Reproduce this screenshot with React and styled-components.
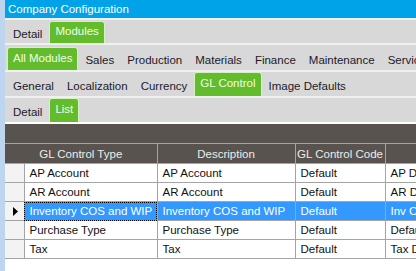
import React from "react";
import styled, { createGlobalStyle, css } from "styled-components";

const GlobalStyle = createGlobalStyle`
  html, body {
    margin: 0;
    padding: 0;
    overflow: hidden;
    background: #fff;
    font-family: "Liberation Sans", Arial, sans-serif;
    font-size: 11.5px;
  }
`;

const Page = styled.div`
  display: flex;
  width: 416px;
  height: 271px;
  overflow: hidden;
  background: #fff;
`;

const LeftStrip = styled.div`
  width: 5px;
  flex: none;
  background: #bdd5ee;
`;

const Main = styled.div`
  flex: 1;
  min-width: 0;
  display: flex;
  flex-direction: column;
  overflow: hidden;
`;

const TitleBar = styled.div`
  height: 18px;
  line-height: 18px;
  padding-left: 3px;
  background: #00a3e8;
  color: #fff;
  white-space: nowrap;
`;

const TabRow = styled.div`
  display: flex;
  align-items: stretch;
  gap: 1px;
  height: ${(p) => p.$height}px;
  box-sizing: border-box;
  padding: ${(p) => p.$top}px 0 0 2px;
  border-top: 2px solid #f0f0f0;
  background: #d8d8d8;
  white-space: nowrap;
`;

const Tab = styled.div`
  display: flex;
  align-items: center;
  padding: 2px 5px 0;
  border: 1px solid transparent;
  border-bottom: 0;
  color: #1c1a2c;
  cursor: pointer;

  ${(p) =>
    p.$active &&
    css`
      padding: 0 5px 3px;
      background: #62bc2c;
      border-color: #d6efc4;
      border-radius: 3px 3px 0 0;
      color: #f2fcea;
    `}
`;

const GroupBand = styled.div`
  height: 19px;
  margin-top: 2px;
  background: #58534f;
  border-bottom: 1px solid #a4a4a4;
`;

const GridWrap = styled.div`
  flex: 1;
  overflow: hidden;
  background: #fff;
`;

const Grid = styled.table`
  border-collapse: collapse;
  table-layout: fixed;
  width: 460px;
`;

const HeadCell = styled.th`
  height: 19px;
  padding: 0;
  background: #58534f;
  color: #ececec;
  font-weight: normal;
  text-align: center;
  border: 1px solid #a4a4a4;
  border-top: 0;
  white-space: nowrap;
  overflow: hidden;
`;

const RowHead = styled.td`
  height: 18px;
  padding: 0;
  background: #f3f3f3;
  border: 1px solid #a4a4a4;
  border-left: 0;
  text-align: center;
  vertical-align: middle;
`;

const Cell = styled.td`
  height: 18px;
  padding: 0 5px;
  border: 1px solid #a4a4a4;
  background: ${(p) => (p.$selected ? "#3399ff" : "#fff")};
  color: ${(p) => (p.$selected ? "#fff" : "#111")};
  white-space: nowrap;
  overflow: hidden;
  ${(p) =>
    p.$focus &&
    css`
      outline: 1px dotted #000;
      outline-offset: -1px;
    `}
`;

const Arrow = () => (
  <svg width="6" height="9" viewBox="0 0 6 9" style={{ display: "block", margin: "0 0 0 8px" }}>
    <path d="M0 0 L5 4.5 L0 9 Z" fill="#000" />
  </svg>
);

const rows = [
  ["AP Account", "AP Account", "Default", "AP Default"],
  ["AR Account", "AR Account", "Default", "AR Default"],
  ["Inventory COS and WIP", "Inventory COS and WIP", "Default", "Inv COS Default"],
  ["Purchase Type", "Purchase Type", "Default", "Default"],
  ["Tax", "Tax", "Default", "Tax Default"],
];

const selectedRow = 2;

function Tabs({ items, active, height, top }) {
  return (
    <TabRow $height={height} $top={top}>
      {items.map((t) => (
        <Tab key={t} $active={t === active}>
          {t}
        </Tab>
      ))}
    </TabRow>
  );
}

export default function App() {
  return (
    <>
      <GlobalStyle />
      <Page>
        <LeftStrip />
        <Main>
          <TitleBar>Company Configuration</TitleBar>
          <Tabs items={["Detail", "Modules"]} active="Modules" height={25} top={1} />
          <Tabs
            items={["All Modules", "Sales", "Production", "Materials", "Finance", "Maintenance", "Service"]}
            active="All Modules"
            height={27}
            top={2}
          />
          <Tabs
            items={["General", "Localization", "Currency", "GL Control", "Image Defaults"]}
            active="GL Control"
            height={26}
            top={0}
          />
          <Tabs items={["Detail", "List"]} active="List" height={26} top={0} />
          <GroupBand />
          <GridWrap>
            <Grid>
              <colgroup>
                <col style={{ width: 19 }} />
                <col style={{ width: 133 }} />
                <col style={{ width: 138 }} />
                <col style={{ width: 90 }} />
                <col style={{ width: 80 }} />
              </colgroup>
              <thead>
                <tr>
                  <HeadCell colSpan={2} style={{ borderLeft: 0 }}>GL Control Type</HeadCell>
                  <HeadCell>Description</HeadCell>
                  <HeadCell>GL Control Code</HeadCell>
                  <HeadCell />
                </tr>
              </thead>
              <tbody>
                {rows.map((r, i) => {
                  const sel = i === selectedRow;
                  return (
                    <tr key={r[0]}>
                      <RowHead>{sel && <Arrow />}</RowHead>
                      {r.map((v, j) => (
                        <Cell key={j} $selected={sel} $focus={sel && j === 0}>
                          {v}
                        </Cell>
                      ))}
                    </tr>
                  );
                })}
              </tbody>
            </Grid>
          </GridWrap>
        </Main>
      </Page>
    </>
  );
}
